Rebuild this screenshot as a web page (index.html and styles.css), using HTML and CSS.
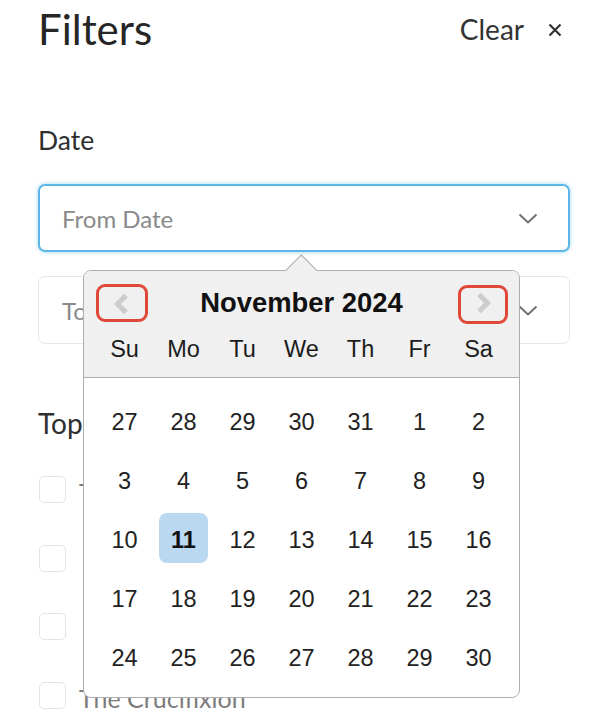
FILE: index.html
```html
<!DOCTYPE html>
<html lang="en">
<head>
<meta charset="utf-8">
<title>Filters</title>
<link rel="stylesheet" href="styles.css">
</head>
<body>
<div class="panel">
  <header class="head">
    <h1 class="title">Filters</h1>
    <button class="clear" type="button">Clear
      <svg class="x-icon" width="14" height="14" viewBox="0 0 14 14"><path d="M1.5 1.5 L12.5 12.5 M12.5 1.5 L1.5 12.5" stroke="#333" stroke-width="2.2" fill="none"/></svg>
    </button>
  </header>

  <section>
    <h2 class="label label-date">Date</h2>
    <div class="fields">
      <div class="input focus">
        <span>From Date</span>
        <svg class="chev" width="20" height="11" viewBox="0 0 20 11"><polyline points="1.5,1.5 10,9.5 18.5,1.5" fill="none" stroke="#707070" stroke-width="2"/></svg>
      </div>
      <div class="input">
        <span>To Date</span>
        <svg class="chev" width="20" height="11" viewBox="0 0 20 11"><polyline points="1.5,1.5 10,9.5 18.5,1.5" fill="none" stroke="#707070" stroke-width="2"/></svg>
      </div>

      <div class="cal">
        <div class="cal-tri"></div>
        <svg class="nav nav-prev" width="18" height="22" viewBox="0 0 18 22"><polyline points="14,2.5 5.5,11 14,19.5" fill="none" stroke="#cccccc" stroke-width="5"/></svg>
        <svg class="nav nav-next" width="18" height="22" viewBox="0 0 18 22"><polyline points="4,2.5 12.5,11 4,19.5" fill="none" stroke="#cccccc" stroke-width="5"/></svg>
        <div class="mark mark-prev"></div>
        <div class="mark mark-next"></div>
        <div class="cal-head">
          <h3 class="cal-title">November 2024</h3>
          <div class="cal-names">
            <span>Su</span><span>Mo</span><span>Tu</span><span>We</span><span>Th</span><span>Fr</span><span>Sa</span>
          </div>
        </div>
        <div class="cal-body">
          <div class="cal-grid">
            <span class="day">27</span><span class="day">28</span><span class="day">29</span><span class="day">30</span><span class="day">31</span><span class="day">1</span><span class="day">2</span>
            <span class="day">3</span><span class="day">4</span><span class="day">5</span><span class="day">6</span><span class="day">7</span><span class="day">8</span><span class="day">9</span>
            <span class="day">10</span><span class="day sel">11</span><span class="day">12</span><span class="day">13</span><span class="day">14</span><span class="day">15</span><span class="day">16</span>
            <span class="day">17</span><span class="day">18</span><span class="day">19</span><span class="day">20</span><span class="day">21</span><span class="day">22</span><span class="day">23</span>
            <span class="day">24</span><span class="day">25</span><span class="day">26</span><span class="day">27</span><span class="day">28</span><span class="day">29</span><span class="day">30</span>
          </div>
        </div>
      </div>
    </div>
  </section>

  <section>
    <h2 class="label label-topics">Topics</h2>
    <ul class="options">
      <li class="option"><span class="box"></span><span class="opt-text">The Nativity</span></li>
      <li class="option"><span class="box"></span><span class="opt-text opt-inset">Jesus Heals the Sick</span></li>
      <li class="option"><span class="box"></span><span class="opt-text opt-inset">Jesus Walks on Water</span></li>
      <li class="option"><span class="box"></span><span class="opt-text">The Crucifixion</span></li>
    </ul>
  </section>
</div>
</body>
</html>
```

FILE: styles.css
```css
* { box-sizing: border-box; }

body {
  margin: 0;
  background: #ffffff;
  font-family: Lato, "Open Sans", sans-serif;
  color: #2d2d2d;
}

.panel {
  padding: 7px 32px 0 38px;
}

.head {
  display: flex;
  align-items: center;
  justify-content: space-between;
  height: 44px;
  padding-right: 8px;
}

.title {
  margin: 0;
  font-size: 42px;
  font-weight: 400;
  line-height: 44px;
  color: #262626;
}

.clear {
  display: flex;
  align-items: center;
  gap: 24px;
  padding: 0;
  border: 0;
  background: none;
  font-family: inherit;
  font-size: 28px;
  line-height: 28px;
  color: #333333;
}

.x-icon { display: block; margin-top: 2px; }

.label {
  margin: 0;
  font-weight: 400;
  line-height: 32px;
  color: #2f2f2f;
}

.label-date { margin: 73px 0 28px; font-size: 26.5px; }
.label-topics { margin: 63px 0 37px; font-size: 28px; }

.fields {
  position: relative;
  display: flex;
  flex-direction: column;
  gap: 24px;
}

.input {
  height: 68px;
  display: flex;
  align-items: center;
  justify-content: space-between;
  padding: 0 31px 0 23px;
  border: 1px solid #e6e6e6;
  border-radius: 7px;
  font-size: 24px;
  color: #8a8a8a;
}

.input.focus {
  border: 2px solid #5cb6e6;
  box-shadow: 0 0 4px rgba(92, 182, 230, 0.6);
  padding: 0 30px 0 22px;
}

.chev { display: block; }

.options {
  list-style: none;
  margin: 0;
  padding: 0;
  display: flex;
  flex-direction: column;
  gap: 41.7px;
}

.option {
  display: flex;
  align-items: center;
  gap: 13px;
  height: 27px;
  font-size: 25px;
  color: #7c7c7c;
}

.opt-text { padding-top: 5px; }
.opt-inset { padding-left: 6px; }

.box {
  width: 27px;
  height: 27px;
  margin-left: 1px;
  border: 1.5px solid #e3e3e3;
  border-radius: 5px;
  flex: none;
}

/* calendar popover */
.cal {
  position: absolute;
  left: 45px;
  top: 86px;
  width: 437px;
  border: 1px solid #aeaeae;
  border-radius: 8px;
  background: #ffffff;
  font-family: "Liberation Sans", Arial, sans-serif;
  color: #1c1c1c;
  z-index: 2;
}

.cal-tri {
  position: absolute;
  left: 205.7px;
  top: -11.8px;
  width: 22.6px;
  height: 22.6px;
  background: #f0f0f0;
  border-top: 1px solid #aeaeae;
  border-left: 1px solid #aeaeae;
  transform: rotate(45deg);
  z-index: 1;
}

.cal-head {
  background: #f0f0f0;
  border-bottom: 1px solid #aeaeae;
  border-radius: 7px 7px 0 0;
  padding: 15px 11px 0;
}

.cal-title {
  margin: 0;
  text-align: center;
  font-size: 27.4px;
  font-weight: 700;
  line-height: 34px;
  color: #111111;
}

.cal-names,
.cal-grid {
  display: grid;
  grid-template-columns: repeat(7, 59px);
}

.cal-names span {
  height: 57px;
  padding-top: 5px;
  line-height: 49px;
  text-align: center;
  font-size: 23.5px;
}

.cal-body { padding: 12px 11px; }

.cal-grid { grid-auto-rows: 59px; }

.day {
  margin: 5px;
  height: 50px;
  padding-top: 3px;
  line-height: 48px;
  border-radius: 8px;
  text-align: center;
  font-size: 23.5px;
  color: #222222;
}

.day.sel {
  background: #bad9f1;
  font-weight: 700;
  color: #111111;
}

.nav {
  position: absolute;
  z-index: 2;
}

.nav-prev { left: 28px; top: 22px; }
.nav-next { left: 391px; top: 21px; }

.mark {
  position: absolute;
  border: 3px solid #e0493a;
  border-radius: 9px;
  z-index: 3;
}

.mark-prev { left: 12px; top: 13px; width: 52px; height: 38px; }
.mark-next { left: 374px; top: 14px; width: 50px; height: 39px; }
```
